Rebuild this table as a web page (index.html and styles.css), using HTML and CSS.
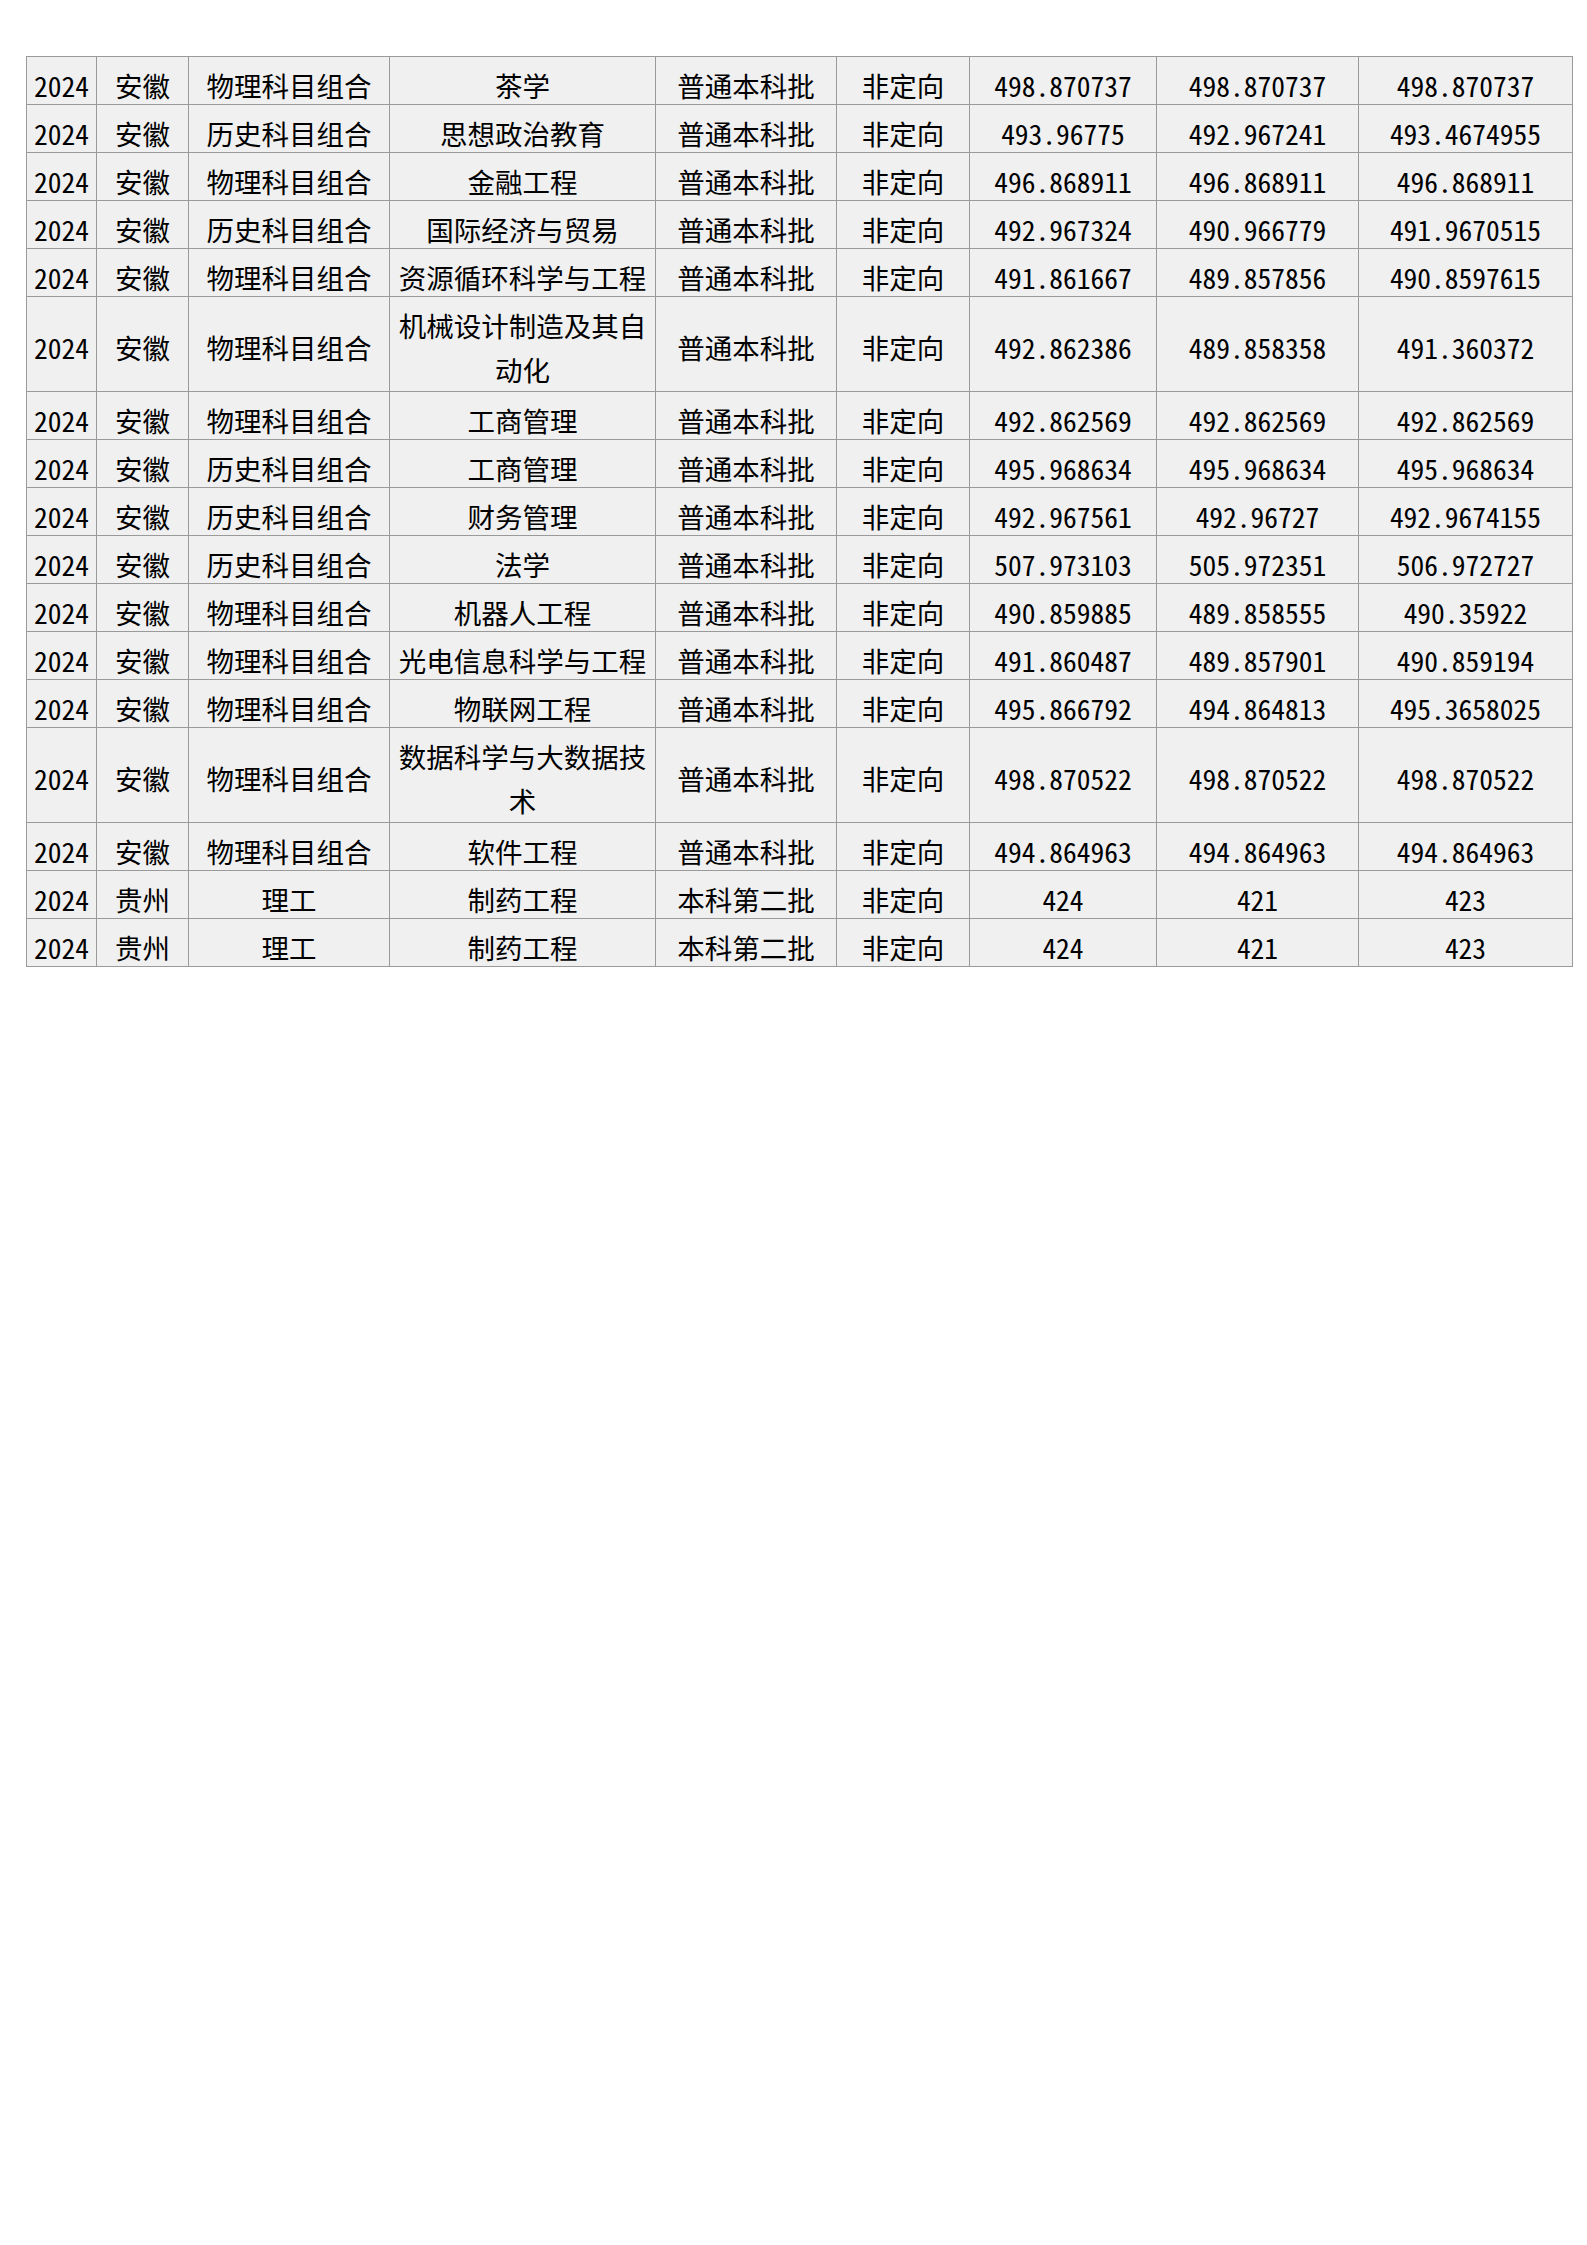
FILE: index.html
```html
<!DOCTYPE html>
<html lang="zh-CN">
<head>
<meta charset="utf-8">
<title>2024 录取分数</title>
<link rel="stylesheet" href="styles.css">
</head>
<body>
<div class="page">
<table class="scores">
<colgroup>
<col class="c-year"><col class="c-prov"><col class="c-type"><col class="c-major"><col class="c-batch"><col class="c-dir"><col class="c-max"><col class="c-min"><col class="c-avg">
</colgroup>
<tbody>
<tr><td>2024</td><td>安徽</td><td>物理科目组合</td><td>茶学</td><td>普通本科批</td><td>非定向</td><td>498.870737</td><td>498.870737</td><td>498.870737</td></tr>
<tr><td>2024</td><td>安徽</td><td>历史科目组合</td><td>思想政治教育</td><td>普通本科批</td><td>非定向</td><td>493.96775</td><td>492.967241</td><td>493.4674955</td></tr>
<tr><td>2024</td><td>安徽</td><td>物理科目组合</td><td>金融工程</td><td>普通本科批</td><td>非定向</td><td>496.868911</td><td>496.868911</td><td>496.868911</td></tr>
<tr><td>2024</td><td>安徽</td><td>历史科目组合</td><td>国际经济与贸易</td><td>普通本科批</td><td>非定向</td><td>492.967324</td><td>490.966779</td><td>491.9670515</td></tr>
<tr><td>2024</td><td>安徽</td><td>物理科目组合</td><td>资源循环科学与工程</td><td>普通本科批</td><td>非定向</td><td>491.861667</td><td>489.857856</td><td>490.8597615</td></tr>
<tr class="tall"><td>2024</td><td>安徽</td><td>物理科目组合</td><td>机械设计制造及其自动化</td><td>普通本科批</td><td>非定向</td><td>492.862386</td><td>489.858358</td><td>491.360372</td></tr>
<tr><td>2024</td><td>安徽</td><td>物理科目组合</td><td>工商管理</td><td>普通本科批</td><td>非定向</td><td>492.862569</td><td>492.862569</td><td>492.862569</td></tr>
<tr><td>2024</td><td>安徽</td><td>历史科目组合</td><td>工商管理</td><td>普通本科批</td><td>非定向</td><td>495.968634</td><td>495.968634</td><td>495.968634</td></tr>
<tr><td>2024</td><td>安徽</td><td>历史科目组合</td><td>财务管理</td><td>普通本科批</td><td>非定向</td><td>492.967561</td><td>492.96727</td><td>492.9674155</td></tr>
<tr><td>2024</td><td>安徽</td><td>历史科目组合</td><td>法学</td><td>普通本科批</td><td>非定向</td><td>507.973103</td><td>505.972351</td><td>506.972727</td></tr>
<tr><td>2024</td><td>安徽</td><td>物理科目组合</td><td>机器人工程</td><td>普通本科批</td><td>非定向</td><td>490.859885</td><td>489.858555</td><td>490.35922</td></tr>
<tr><td>2024</td><td>安徽</td><td>物理科目组合</td><td>光电信息科学与工程</td><td>普通本科批</td><td>非定向</td><td>491.860487</td><td>489.857901</td><td>490.859194</td></tr>
<tr><td>2024</td><td>安徽</td><td>物理科目组合</td><td>物联网工程</td><td>普通本科批</td><td>非定向</td><td>495.866792</td><td>494.864813</td><td>495.3658025</td></tr>
<tr class="tall"><td>2024</td><td>安徽</td><td>物理科目组合</td><td>数据科学与大数据技术</td><td>普通本科批</td><td>非定向</td><td>498.870522</td><td>498.870522</td><td>498.870522</td></tr>
<tr><td>2024</td><td>安徽</td><td>物理科目组合</td><td>软件工程</td><td>普通本科批</td><td>非定向</td><td>494.864963</td><td>494.864963</td><td>494.864963</td></tr>
<tr><td>2024</td><td>贵州</td><td>理工</td><td>制药工程</td><td>本科第二批</td><td>非定向</td><td>424</td><td>421</td><td>423</td></tr>
<tr><td>2024</td><td>贵州</td><td>理工</td><td>制药工程</td><td>本科第二批</td><td>非定向</td><td>424</td><td>421</td><td>423</td></tr>
</tbody>
</table>
</div>
</body>
</html>
```

FILE: styles.css
```css
html, body {
  margin: 0;
  padding: 0;
  background: #ffffff;
}

.page {
  padding: 56px 0 0 26px;
  width: 1587px;
  height: 2245px;
  box-sizing: border-box;
}

.scores {
  border-collapse: collapse;
  table-layout: fixed;
  width: 1547px;
  font-family: "Noto Sans Mono CJK SC", "Noto Sans CJK SC", sans-serif;
  font-size: 27.5px;
  color: #000000;
}

.c-year { width: 70px; }
.c-prov { width: 92px; }
.c-type { width: 201px; }
.c-major { width: 266px; }
.c-batch { width: 181px; }
.c-dir { width: 133px; }
.c-max { width: 187px; }
.c-min { width: 202px; }
.c-avg { width: 214px; }

.scores td {
  border: 1px solid #9a9a9a;
  background: #f0f0f0;
  text-align: center;
  vertical-align: middle;
  height: 37px;
  padding: 10px 2px 0;
  line-height: 37px;
  white-space: normal;
  word-break: break-all;
}

.scores tr.tall td {
  height: 88px;
  padding-top: 6px;
  line-height: 44px;
}
```
